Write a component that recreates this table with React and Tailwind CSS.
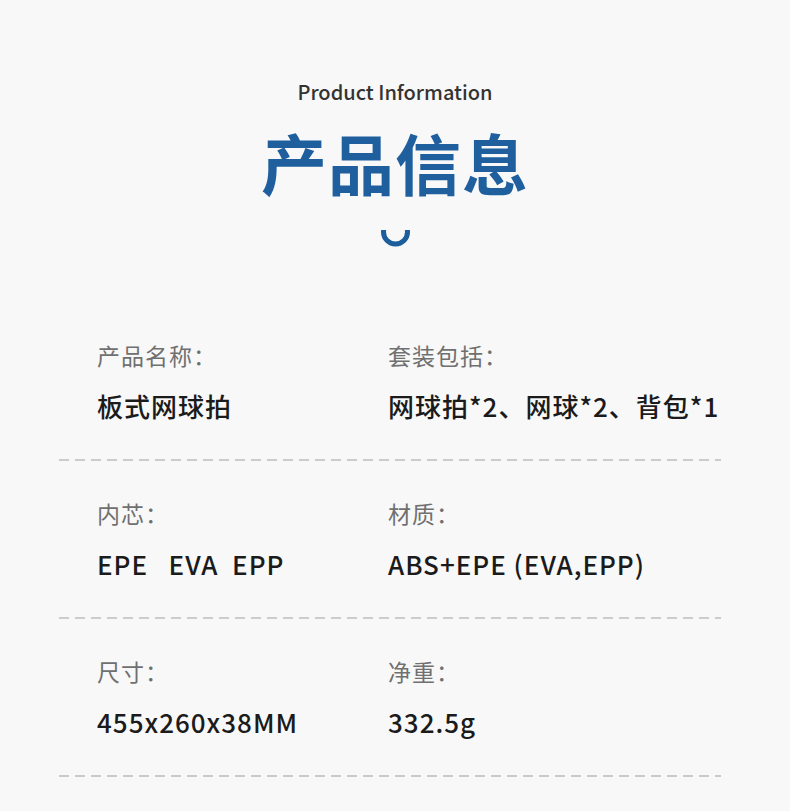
const ROWS = [
  [
    { label: '产品名称：', value: '板式网球拍' },
    { label: '套装包括：', value: '网球拍*2、网球*2、背包*1' },
  ],
  [
    { label: '内芯：', value: 'EPE\u00a0\u00a0\u00a0EVA\u00a0\u00a0EPP' },
    { label: '材质：', value: 'ABS+EPE (EVA,EPP)' },
  ],
  [
    { label: '尺寸：', value: '455x260x38MM' },
    { label: '净重：', value: '332.5g' },
  ],
];

const Dashed = () => (
  <div className="h-[2px] w-full bg-[repeating-linear-gradient(to_right,#cbcbcb_0_10px,transparent_10px_16px)]" />
);

const InfoRow = ({ items, first }) => (
  <div className={first ? '' : 'pt-[37px]'}>
    <div className="grid grid-cols-[291px_1fr] pl-[38px]">
      {items.map((it) => (
        <div key={it.label}>
          <div className="h-[30px] text-[23px] leading-[30px] tracking-[1px] text-[#707070]">{it.label}</div>
          <div className="mt-[18px] h-[36px] whitespace-nowrap text-[26px] font-medium leading-[36px] tracking-[1px] text-[#1b1b1b]">
            {it.value}
          </div>
        </div>
      ))}
    </div>
    <div className="pt-[35px]">
      <Dashed />
    </div>
  </div>
);

export default function App() {
  return (
    <div
      className="min-h-[811px] w-full bg-[#f8f8f8]"
      style={{ fontFamily: '"Noto Sans CJK SC", "Noto Sans", sans-serif' }}
    >
      <div className="flex flex-col items-center pt-[80px]">
        <div className="h-[24px] text-[20px] font-medium leading-[24px] text-[#333333]">Product Information</div>
        <div className="mt-[22px] h-[70px] text-[66px] font-bold leading-[70px] tracking-[1px] text-[#1f5f9e]">
          产品信息
        </div>
        <svg className="mt-[34px]" width="29" height="17" viewBox="0 0 29 17">
          <circle cx="14.5" cy="2" r="12" fill="none" stroke="#1c5d9c" strokeWidth="5" />
        </svg>
      </div>
      <div className="ml-[59px] mt-[93px] w-[662px] pb-[35px]">
        {ROWS.map((items, i) => (
          <InfoRow key={i} items={items} first={i === 0} />
        ))}
      </div>
    </div>
  );
}
